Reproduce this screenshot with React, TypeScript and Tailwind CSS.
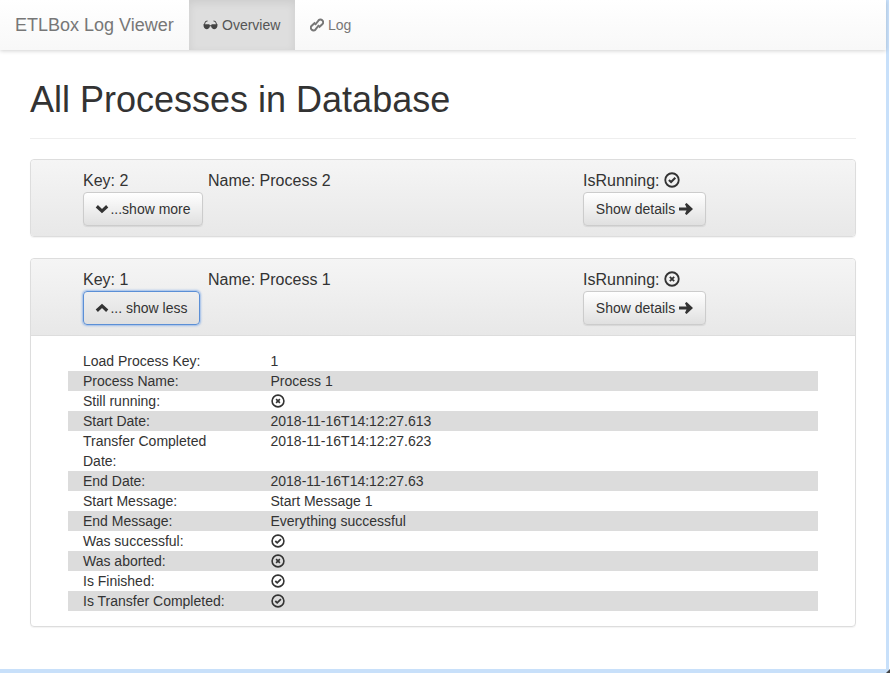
const sans = { fontFamily: '"Liberation Sans", Arial, sans-serif' };

function CheckCircle({ size = 14 }: { size?: number }) {
  return (
    <svg width={size} height={size} viewBox="0 0 14 14" className="inline-block -translate-y-px">
      <circle cx="7" cy="7" r="5.9" fill="none" stroke="#333" strokeWidth="1.6" />
      <path d="M4.300 7 6.200 8.800 9.900 5.100" fill="none" stroke="#333" strokeWidth="1.800" />
    </svg>
  );
}

function CrossCircle({ size = 14 }: { size?: number }) {
  return (
    <svg width={size} height={size} viewBox="0 0 14 14" className="inline-block -translate-y-px">
      <circle cx="7" cy="7" r="5.9" fill="none" stroke="#333" strokeWidth="1.6" />
      <path d="M5.100 5.100 8.900 8.900M8.900 5.100 5.100 8.900" fill="none" stroke="#333" strokeWidth="1.600" />
    </svg>
  );
}

function Chevron({ up }: { up?: boolean }) {
  return (
    <svg width="14" height="10" viewBox="0 0 14 10" className="inline-block">
      <path d={up ? "M1.800 7.700 7 2.900l5.200 4.800" : "M1.800 2.300 7 7.100l5.200-4.800"} fill="none" stroke="#333" strokeWidth="3.200" />
    </svg>
  );
}

function ArrowRight() {
  return (
    <svg width="14" height="12" viewBox="0 0 14 12" className="inline-block">
      <path d="M0 4.500h7.500L6 1.200 7.600 0 14 6l-6.400 6L6 10.800 7.500 7.500H0z" fill="#333" />
    </svg>
  );
}

function Sunglasses() {
  return (
    <svg width="15" height="10" viewBox="0 0 15 10" className="inline-block">
      <path d="M1.200 5 2.500 1.500 4.500 1M13.800 5 12.500 1.500 10.500 1" fill="none" stroke="#444" strokeWidth="1" />
      <path d="M.5 4.300h5.800l.5.900h1.400l.5-.9h5.800c.2 3-1 4.900-3.100 4.900-1.800 0-3-1.400-3.300-3H6.900c-.3 1.600-1.500 3-3.300 3C1.500 9.200.3 7.300.5 4.300z" fill="#444" />
    </svg>
  );
}

function LinkIcon() {
  return (
    <svg width="14" height="14" viewBox="0 0 14 14" className="inline-block">
      <g fill="none" stroke="#777" strokeWidth="2">
        <path d="M5 7 8.600 2.300a2.500 2.500 0 0 1 3.600 0l.3.300a2.500 2.500 0 0 1 0 3.400L8.800 9.500" />
        <path d="M9 7 5.400 11.700a2.500 2.500 0 0 1-3.600 0l-.3-.3a2.500 2.500 0 0 1 0-3.400L5.200 4.500" />
      </g>
    </svg>
  );
}

function PanelButton({ children, focused, width }: { children: React.ReactNode; focused?: boolean; width: string }) {
  return (
    <button
      className={
        focused
          ? "h-[34px] w-[117px] rounded border border-[#5b8fd6] bg-gradient-to-b from-[#f0f0f0] to-[#e0e0e0] text-sm text-[#333] shadow-[0_0_2px_1px_rgba(102,155,230,0.6)]"
          : width + " h-[34px] rounded border border-[#ccc] bg-gradient-to-b from-white to-[#e0e0e0] text-sm text-[#333] shadow-[0_1px_1px_rgba(0,0,0,0.08)]"
      }
    >
      {children}
    </button>
  );
}

function PanelHead({ id, name, open, running }: { id: number; name: string; open: boolean; running: boolean }) {
  return (
    <div className="flex h-[76px] rounded-t bg-gradient-to-b from-[#f5f5f5] to-[#e8e8e8] pl-[52px] pt-[10px] text-base text-[#333]">
      <div className="w-[125px]">
        <div className="h-[22px] leading-[22px]">Key: {id}</div>
        {open ? (
          <PanelButton focused width="w-[117px]">
            <span className="flex items-center justify-center">
              <Chevron up />
              <span className="ml-[1px]">... show less</span>
            </span>
          </PanelButton>
        ) : (
          <PanelButton width="w-[120px]">
            <span className="flex items-center justify-center">
              <Chevron />
              <span className="ml-[1px]">...show more</span>
            </span>
          </PanelButton>
        )}
      </div>
      <div className="h-[22px] w-[375px] leading-[22px]">Name: {name}</div>
      <div>
        <div className="flex h-[22px] items-center gap-[4px] leading-[22px]">
          IsRunning: {running ? <CheckCircle size={16} /> : <CrossCircle size={16} />}
        </div>
        <PanelButton width="w-[123px]">
          <span className="flex items-center justify-center gap-1">
            Show details <ArrowRight />
          </span>
        </PanelButton>
      </div>
    </div>
  );
}

const rows: { label: string; value?: string; icon?: "ok" | "no" }[] = [
  { label: "Load Process Key:", value: "1" },
  { label: "Process Name:", value: "Process 1" },
  { label: "Still running:", icon: "no" },
  { label: "Start Date:", value: "2018-11-16T14:12:27.613" },
  { label: "Transfer Completed Date:", value: "2018-11-16T14:12:27.623" },
  { label: "End Date:", value: "2018-11-16T14:12:27.63" },
  { label: "Start Message:", value: "Start Message 1" },
  { label: "End Message:", value: "Everything successful" },
  { label: "Was successful:", icon: "ok" },
  { label: "Was aborted:", icon: "no" },
  { label: "Is Finished:", icon: "ok" },
  { label: "Is Transfer Completed:", icon: "ok" },
];

export default function App() {
  return (
    <div style={sans} className="relative h-[673px] w-[890px] overflow-hidden bg-white">
      <div className="h-[673px] w-[889px] border-r-[3px] border-b-[4px] border-[#c8e0fa] bg-white">
        <nav className="flex h-[50px] w-full items-stretch bg-gradient-to-b from-white to-[#f8f8f8] shadow-[0_1px_4px_rgba(0,0,0,0.18)]">
          <div className="flex w-[189px] items-center pl-[15px] text-lg text-[#777]">ETLBox Log Viewer</div>
          <div className="flex w-[106px] items-center gap-[4px] bg-[#dedede] pl-[14px] text-sm text-[#555] shadow-[inset_0_3px_9px_rgba(0,0,0,0.08)]">
            <Sunglasses /> Overview
          </div>
          <div className="flex items-center gap-[4px] pl-[15px] text-sm text-[#777]">
            <LinkIcon /> Log
          </div>
        </nav>
        <main className="px-[30px]">
          <h1 className="mt-[20px] border-b border-[#eee] pt-[10px] pb-[18px] text-[36px] leading-[40px] font-normal text-[#333]">
            All Processes in Database
          </h1>
          <section className="mt-[20px] w-[826px] overflow-hidden rounded border border-[#ddd] shadow-[0_1px_1px_rgba(0,0,0,0.05)]">
            <PanelHead id={2} name="Process 2" open={false} running={true} />
          </section>
          <section className="mt-[21px] w-[826px] rounded border border-[#ddd] shadow-[0_1px_1px_rgba(0,0,0,0.05)]">
            <PanelHead id={1} name="Process 1" open={true} running={false} />
            <div className="border-t border-[#ddd] pt-[15px] pb-[15px] pl-[37px] text-sm text-[#333]">
              {rows.map((r, i) => (
                <div key={r.label} className={i % 2 === 1 ? "flex w-[750px] bg-[#dcdcdc] leading-5" : "flex w-[750px] leading-5"}>
                  <div className="w-[187.5px] px-[15px]">{r.label}</div>
                  <div className="flex-1 px-[15px]">
                    {r.value}
                    {r.icon === "ok" && <CheckCircle />}
                    {r.icon === "no" && <CrossCircle />}
                  </div>
                </div>
              ))}
            </div>
          </section>
        </main>
      </div>
      <svg width="4" height="4" viewBox="0 0 4 4" className="absolute right-0 bottom-0">
        <path d="M4 0v4H0z" fill="#444" />
      </svg>
    </div>
  );
}
